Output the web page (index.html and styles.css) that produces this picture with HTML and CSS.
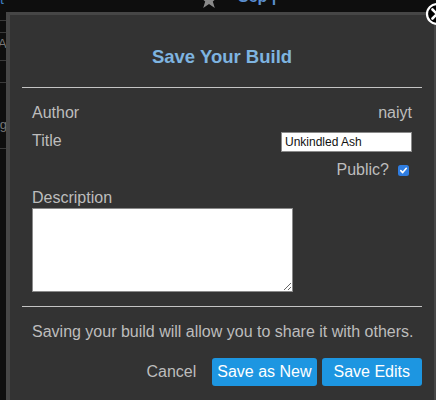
FILE: index.html
```html
<!DOCTYPE html>
<html>
<head>
<meta charset="utf-8">
<link rel="stylesheet" href="styles.css">
</head>
<body>
<div class="page">
  <div class="topbar">
    <span class="corner-text">t</span>
    <svg class="star" width="18" height="16" viewBox="0 0 18 16"><polygon points="9,-6 11.5,1 18,1 12.8,5.5 14.8,12 9,8 3.2,12 5.2,5.5 0,1 6.5,1" fill="#8a8a8a"/></svg>
    <span class="top-link">Sep |</span>
  </div>
  <div class="main">
    <div class="side">
      <div class="side-line l1"></div>
      <div class="side-line l2"></div>
      <div class="side-cell">As</div>
      <div class="side-line l3"></div>
      <div class="side-line l4"></div>
      <div class="side-cell c2">lig</div>
      <div class="side-line l5"></div>
    </div>
    <div class="modal">
      <h2 class="modal-title">Save Your Build</h2>
      <hr class="rule">
      <div class="fields">
        <div class="row row-author"><span class="label">Author</span><span class="value">naiyt</span></div>
        <div class="row row-title"><span class="label">Title</span><input class="title-input" type="text" value="Unkindled Ash"></div>
        <div class="row row-public"><span class="label">Public?</span><span class="check"><svg width="11" height="11" viewBox="0 0 11 11"><rect x="0" y="0" width="11" height="11" rx="2.5" fill="#2f7de1"/><path d="M2.8 5.6 L4.7 7.6 L8.3 3.3" stroke="#fff" stroke-width="1.6" fill="none" stroke-linecap="round" stroke-linejoin="round"/></svg></span></div>
        <div class="row row-desc"><span class="label">Description</span></div>
        <textarea class="desc"></textarea>
      </div>
      <hr class="rule rule2">
      <p class="note">Saving your build will allow you to share it with others.</p>
      <div class="actions">
        <span class="cancel">Cancel</span>
        <button class="btn">Save as New</button>
        <button class="btn">Save Edits</button>
      </div>
    </div>
  </div>
  <svg class="close" width="24" height="24" viewBox="0 0 24 24"><circle cx="12" cy="12" r="10" fill="#000" stroke="#fff" stroke-width="2.2"/><path d="M7.5 7.5 L16.5 16.5 M16.5 7.5 L7.5 16.5" stroke="#fff" stroke-width="2.6" stroke-linecap="round"/></svg>
</div>
</body>
</html>
```
FILE: styles.css
```css
html, body {
  margin: 0;
  padding: 0;
  background: #0e0e0e;
}
.page {
  position: relative;
  width: 436px;
  height: 400px;
  overflow: hidden;
  background: #0e0e0e;
  font-family: "Liberation Sans", Arial, sans-serif;
}
.topbar {
  height: 12px;
  position: relative;
  overflow: hidden;
}
.corner-text {
  position: absolute;
  left: 0;
  top: -9px;
  color: #3a7cc0;
  font-size: 14px;
}
.star {
  position: absolute;
  left: 200px;
  top: -4px;
}
.top-link {
  position: absolute;
  left: 238px;
  top: -12px;
  color: #5b8fd0;
  font-size: 16px;
  font-weight: bold;
}
.main {
  display: flex;
  height: 388px;
}
.side {
  width: 6px;
  position: relative;
  overflow: hidden;
  flex: none;
}
.side-line {
  position: absolute;
  left: 0;
  width: 6px;
  height: 1px;
  background: #3a3a3a;
}
.l1 { top: 8px; }
.l2 { top: 20px; }
.l3 { top: 48px; }
.l4 { top: 70px; }
.l5 { top: 136px; }
.side-cell {
  position: absolute;
  left: -2px;
  top: 24px;
  color: #777;
  font-size: 13px;
}
.side-cell.c2 { top: 105px; left: -6px; }
.modal {
  flex: 1;
  min-width: 0;
  background: #333333;
  border-top: 3px solid #464646;
  border-left: 4px solid #464646;
  border-right: 2px solid #464646;
  padding: 0 12px;
  box-sizing: border-box;
}
.modal-title {
  margin: 31px 0 0;
  text-align: center;
  font-size: 18.5px;
  line-height: 22px;
  color: #7eb4e0;
  font-weight: bold;
}
.rule {
  margin: 19px 0 0;
  border: 0;
  height: 1px;
  background: #c4c4c4;
}
.fields {
  padding: 0 10px;
}
.row {
  display: flex;
  align-items: center;
  justify-content: space-between;
  height: 20px;
  color: #bdbdbd;
  font-size: 16px;
}
.row-author { margin-top: 15px; }
.row-title { margin-top: 8px; }
.row-public { margin-top: 9px; justify-content: flex-end; }
.row-desc { margin-top: 8px; }
.value { color: #bdbdbd; }
.title-input {
  width: 131px;
  height: 20px;
  box-sizing: border-box;
  border: 1px solid #8a8a8a;
  padding: 0 3px;
  font-family: "Liberation Sans", Arial, sans-serif;
  font-size: 12px;
  color: #111;
  background: #fff;
  margin-top: 1px;
}
.check {
  display: flex;
  margin-left: 9px;
  margin-right: 3px;
}
.desc {
  display: block;
  width: 261px;
  height: 84px;
  box-sizing: border-box;
  border: 1px solid #8a8a8a;
  margin: 0;
  padding: 2px;
  background: #fff;
  resize: both;
}
.rule2 { margin-top: 14px; }
.note {
  margin: 15px 0 0;
  padding: 0 10px;
  font-size: 16px;
  line-height: 20px;
  color: #bdbdbd;
  white-space: nowrap;
}
.actions {
  margin-top: 16px;
  display: flex;
  justify-content: flex-end;
  align-items: center;
  gap: 5px;
}
.cancel {
  font-size: 16px;
  color: #bdbdbd;
  margin-right: 11px;
}
.btn {
  height: 28px;
  padding: 0 5px;
  background: #1d96e1;
  color: #fff;
  border: 0;
  border-radius: 3px;
  font-family: "Liberation Sans", Arial, sans-serif;
  font-size: 16px;
}
.btn + .btn { padding: 0 12px; }
.close {
  position: absolute;
  left: 425px;
  top: 2px;
}
```
